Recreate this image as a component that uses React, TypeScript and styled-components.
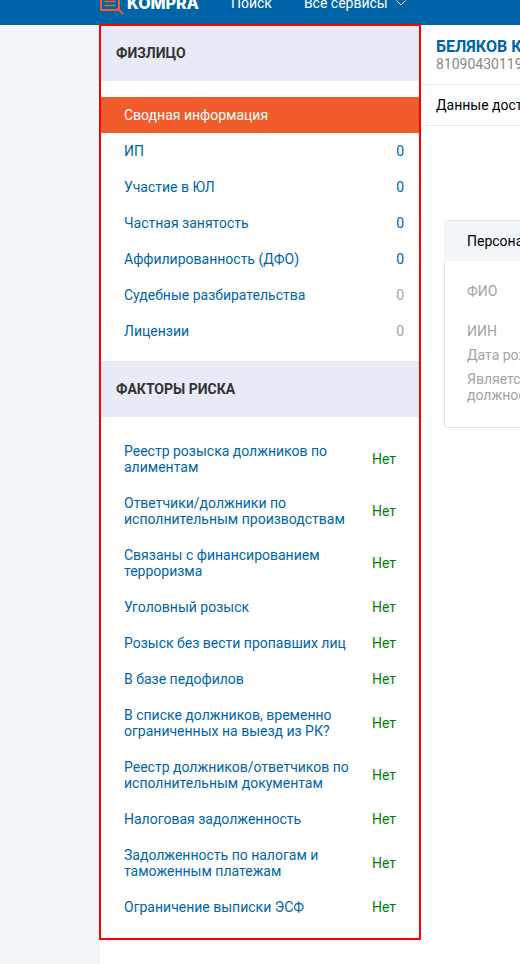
import React from "react";
import styled, { createGlobalStyle } from "styled-components";

const GlobalStyle = createGlobalStyle`
  * { box-sizing: border-box; }
  body {
    margin: 0;
    background: #f2f6f9;
    color: #000;
    font: 14px/16px Roboto, "Liberation Sans", sans-serif;
  }
  a { color: inherit; text-decoration: none; }
`;

const Page = styled.div`
  display: flex;
  flex-direction: column;
  min-height: 100vh;
`;

const HeaderWindow = styled.header`
  display: flex;
  flex: none;
  align-items: flex-end;
  height: 25px;
  overflow: hidden;
  background: #0065a8;
`;

const HeaderBar = styled.div`
  display: flex;
  flex: 1;
  align-items: center;
  gap: 32px;
  height: 44px;
  padding-left: 100px;
  color: #fff;
`;

const Logo = styled.a`
  display: flex;
  align-items: center;
  gap: 2px;
  font: 800 16px/18px Inter, Roboto, sans-serif;
`;

const Nav = styled.nav`
  display: flex;
  gap: 32px;
  white-space: nowrap;
`;

const NavLink = styled.a`
  display: flex;
  align-items: center;
  gap: 8px;
`;

const Body = styled.div`
  display: flex;
  flex: 1;
  align-items: flex-start;
  margin-left: 100px;
  background: #fff;
`;

const Sidebar = styled.aside`
  position: relative;
  flex: none;
  width: 320px;
  background: #fff;
  outline: 2px solid #f00;
  outline-offset: -1px;
`;

const SectionTitle = styled.h2`
  margin: 0;
  padding: 20px 16px;
  background: #e8eaf6;
  color: #333;
  font-size: 14px;
  font-weight: 700;
`;

const Items = styled.ul<{ $bottom: number }>`
  margin: 0;
  padding: 16px 0 ${(p) => p.$bottom}px;
  list-style: none;
`;

const Item = styled.a<{ $active?: boolean; $risk?: boolean }>`
  display: flex;
  align-items: center;
  justify-content: space-between;
  gap: 16px;
  padding: 10px ${(p) => (p.$risk ? 24 : 16)}px 10px 24px;
  background: ${(p) => (p.$active ? "#f15c2c" : "transparent")};
  color: ${(p) => (p.$active ? "#fff" : "#0065a8")};
`;

const Count = styled.span<{ $muted: boolean }>`
  color: ${(p) => (p.$muted ? "#9ea4a9" : "inherit")};
`;

const Verdict = styled.span`
  color: #008000;
`;

const Main = styled.main`
  flex: 1;
  min-width: 0;
  overflow: hidden;
  white-space: nowrap;
`;

const Person = styled.div`
  padding: 12px 16px;
  border-bottom: 1px solid #e8eaf6;
`;

const PersonName = styled.h1`
  margin: 0;
  color: #0065a8;
  font-size: 16px;
  line-height: 19px;
  font-weight: 700;
`;

const PersonId = styled.div`
  color: #888;
`;

const Notice = styled.div`
  padding: 12px 16px;
  border-bottom: 1px solid #e8eaf6;
`;

const Card = styled.section`
  margin: 94px 24px 0;
  min-width: 320px;
  border: 1px solid #dfe3ec;
  border-radius: 4px;
`;

const CardTitle = styled.h2`
  margin: 0 -1px;
  padding: 12px 23px;
  background: #f2f6f9;
  font-size: 14px;
  font-weight: 400;
`;

const Fields = styled.dl`
  display: flex;
  flex-direction: column;
  gap: 8px;
  margin: 0;
  padding: 22px 22px 24px;
  color: #9ea4a9;
`;

const Field = styled.dt<{ $tall?: boolean }>`
  min-height: ${(p) => (p.$tall ? 32 : 16)}px;
`;

const LogoMark = () => (
  <svg width="25" height="30" viewBox="0 0 25 30" fill="none" stroke="#f15c2c" strokeWidth="2" aria-hidden="true">
    <path d="M1 1h18v21H1zM17 20l6 6" />
    <path d="M4.5 9.5h11M4.5 13.5h11M4.5 17.5h11" strokeWidth="1.6" />
  </svg>
);

const Chevron = () => (
  <svg width="10" height="6" viewBox="0 0 10 6" fill="none" stroke="#fff" aria-hidden="true">
    <path d="M.5.5 5 5 9.5.5" />
  </svg>
);

const counts = [
  { label: "ИП", muted: false },
  { label: "Участие в ЮЛ", muted: false },
  { label: "Частная занятость", muted: false },
  { label: "Аффилированность (ДФО)", muted: false },
  { label: "Судебные разбирательства", muted: true },
  { label: "Лицензии", muted: true },
];

const risks = [
  "Реестр розыска должников по алиментам",
  "Ответчики/должники по исполнительным производствам",
  "Связаны с финансированием терроризма",
  "Уголовный розыск",
  "Розыск без вести пропавших лиц",
  "В базе педофилов",
  "В списке должников, временно ограниченных на выезд из РК?",
  "Реестр должников/ответчиков по исполнительным документам",
  "Налоговая задолженность",
  "Задолженность по налогам и таможенным платежам",
  "Ограничение выписки ЭСФ",
];

export default function App() {
  return (
    <Page>
      <GlobalStyle />
      <HeaderWindow>
        <HeaderBar>
          <Logo href="#"><LogoMark />KOMPRA</Logo>
          <Nav>
            <NavLink href="#">Поиск</NavLink>
            <NavLink href="#">Все сервисы <Chevron /></NavLink>
          </Nav>
        </HeaderBar>
      </HeaderWindow>
      <Body>
        <Sidebar>
          <SectionTitle>ФИЗЛИЦО</SectionTitle>
          <Items $bottom={12}>
            <li><Item href="#" $active>Сводная информация</Item></li>
            {counts.map((c) => (
              <li key={c.label}>
                <Item href="#">{c.label}<Count $muted={c.muted}>0</Count></Item>
              </li>
            ))}
          </Items>
          <SectionTitle>ФАКТОРЫ РИСКА</SectionTitle>
          <Items $bottom={14}>
            {risks.map((label) => (
              <li key={label}>
                <Item href="#" $risk>{label}<Verdict>Нет</Verdict></Item>
              </li>
            ))}
          </Items>
        </Sidebar>
        <Main>
          <Person>
            <PersonName>БЕЛЯКОВ К</PersonName>
            <PersonId>81090430119</PersonId>
          </Person>
          <Notice>Данные доступны</Notice>
          <Card>
            <CardTitle>Персональные данные</CardTitle>
            <Fields>
              <Field $tall>ФИО</Field>
              <Field>ИИН</Field>
              <Field>Дата рождения</Field>
              <Field>Является<br />должностным лицом</Field>
            </Fields>
          </Card>
        </Main>
      </Body>
    </Page>
  );
}
